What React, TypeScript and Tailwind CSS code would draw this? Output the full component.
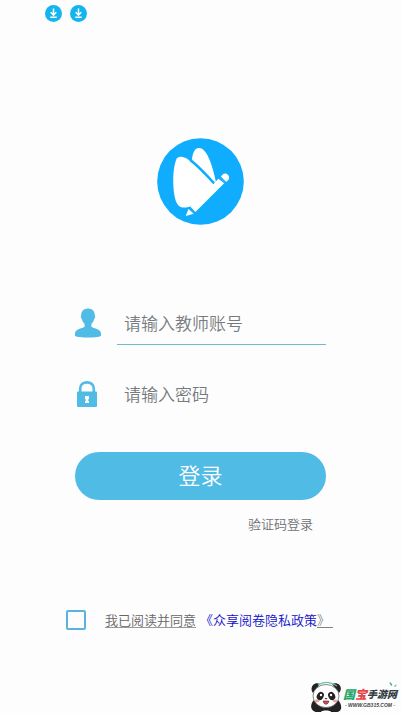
import { useState } from 'react';

function DownloadBadge() {
  return (
    <svg viewBox="0 0 17 17" className="w-[17px] h-[17px]" aria-hidden="true">
      <circle cx="8.5" cy="8.5" r="8.5" fill="#14b5ee" />
      <path d="M8.5 3.5v6.5M5.7 7.2l2.8 2.9 2.8-2.9M5.3 12.3h6.4" fill="none" stroke="#fff" strokeWidth="1.5" />
    </svg>
  );
}

function ButterflyLogo() {
  return (
    <svg viewBox="20 23 263 263" className="w-[87px] h-[87px]" aria-hidden="true">
      <circle cx="151.5" cy="154.5" r="131" fill="#10adff" />
      <g fill="#fff">
        <path d="M80 84C96 72 117 88 137 107L190 161L206 146L223 160L136 247L121 231L126 227C111 236 88 237 80 220C66 190 65 115 80 84Z" />
        <path d="M126 89C127 67 135 53 147 53C168 53 185 93 198 154L194 156C172 132 150 108 126 89Z" />
        <path d="M211 142L218 134C225 126 238 132 238 143C238 147 236 150 233 152L226 158Z" />
        <path d="M115 238L131 252L107 259Z" />
      </g>
      <path d="M119 90C145 111 168 134 192 161" fill="none" stroke="#10adff" strokeWidth="5" />
      <path d="M210 139L229 158" stroke="#10adff" strokeWidth="4" />
    </svg>
  );
}

function UserIcon() {
  return (
    <svg viewBox="0 0 26 30" className="w-[26px] h-[30px]" fill="#50bce6" aria-hidden="true">
      <path d="M13 .5C17.5.5 20 3.5 19.8 7.5C20.5 8 20.3 10 19.2 11C18.5 13.5 17.3 15 16.3 16.2V18.5C18 20.7 25 20.4 26 25V28C22 30 4 30 0 28V25C1 20.4 8 20.7 9.7 18.5V16.2C8.7 15 7.5 13.5 6.8 11C5.7 10 5.5 8 6.2 7.5C6 3.5 8.5.5 13 .5Z" />
    </svg>
  );
}

function LockIcon() {
  return (
    <svg viewBox="0 0 20 26" className="w-5 h-[26px]" aria-hidden="true">
      <path d="M3.2 11V7.5C3.2-.7 16.8-.7 16.8 7.5V11" fill="none" stroke="#50bce6" strokeWidth="2.6" />
      <rect y="10.5" width="20" height="15.5" rx="1" fill="#50bce6" />
      <path d="M8 15h4v3.2h-.8V20H12v2H8v-2h.8v-1.8H8Z" fill="#fff" />
    </svg>
  );
}

function PandaLogo() {
  return (
    <svg viewBox="0 0 32 32" className="w-8 h-8" aria-hidden="true">
      <path d="M3 12C-1 7 4 0 10 3M22 3C28 0 34 6 29 12" fill="#222" />
      <path d="M4 19C-1 24 1 31 7 31H26C32 31 33 24 28 19Z" fill="#222" />
      <ellipse cx="16" cy="15" rx="13" ry="11.5" fill="#fff" stroke="#555" strokeWidth=".7" />
      <path d="M8 4C13 .5 20 .5 27 5" fill="none" stroke="#69c5a4" strokeWidth="1.2" />
      <ellipse cx="10.3" cy="15" rx="3.3" ry="4.2" fill="#222" transform="rotate(30 10.3 15)" />
      <ellipse cx="21.7" cy="15" rx="3.3" ry="4.2" fill="#222" transform="rotate(-30 21.7 15)" />
      <circle cx="11" cy="14" r="1.2" fill="#fff" />
      <circle cx="21" cy="14" r="1.2" fill="#fff" />
      <ellipse cx="7" cy="20" rx="2.2" ry="1.4" fill="#f59aa0" />
      <ellipse cx="25" cy="20" rx="2.2" ry="1.4" fill="#f59aa0" />
      <path d="M14.5 17h3L16 18.5Z" fill="#222" />
      <path d="M13.2 20h5.6C18.3 24.3 13.7 24.3 13.2 20Z" fill="#e34a50" stroke="#222" strokeWidth=".6" />
      <path d="M11 31C11 29 21 29 21 31Z" fill="#fff" />
    </svg>
  );
}

export default function App() {
  const [account, setAccount] = useState('');
  const [password, setPassword] = useState('');
  const [agreed, setAgreed] = useState(false);

  return (
    <div className="min-h-screen flex flex-col bg-[#fdfdfd] font-['Noto_Sans_CJK_SC',sans-serif]">
      <header className="flex gap-2 pt-[5px] pl-[45px]">
        <DownloadBadge />
        <DownloadBadge />
      </header>

      <main className="flex flex-col pt-[116px]">
        <div className="flex justify-center">
          <ButterflyLogo />
        </div>

        <form className="flex flex-col pt-[76px] px-[75px]" onSubmit={(e) => e.preventDefault()}>
          <div className="flex items-center">
            <label htmlFor="account" aria-label="请输入教师账号" className="w-[42px]">
              <UserIcon />
            </label>
            <input
              id="account"
              type="text"
              value={account}
              onChange={(e) => setAccount(e.target.value)}
              placeholder="请输入教师账号"
              className="flex-1 min-w-0 h-11 px-[7px] border-b border-[#6fbccb] text-[17px] font-[350] text-[#555] placeholder:text-[#777b80] outline-none"
            />
          </div>

          <div className="flex items-center pt-[27px]">
            <label htmlFor="password" aria-label="请输入密码" className="w-[42px] pl-[2px]">
              <LockIcon />
            </label>
            <input
              id="password"
              type="password"
              value={password}
              onChange={(e) => setPassword(e.target.value)}
              placeholder="请输入密码"
              className="flex-1 min-w-0 h-11 px-[7px] pb-[2px] text-[17px] font-[350] text-[#555] placeholder:text-[#777b80] outline-none"
            />
          </div>

          <button type="submit" className="mt-9 h-12 pb-1 rounded-full bg-[#50bce6] text-[22px] font-[350] text-white">
            登录
          </button>
          <a href="#sms" className="self-end mt-[14px] mr-[13px] text-[13px] leading-5 font-[350] text-[#707075]">
            验证码登录
          </a>
        </form>

        <div className="flex items-center pt-[76px] pl-[66px]">
          <input
            id="agree"
            type="checkbox"
            checked={agreed}
            onChange={(e) => setAgreed(e.target.checked)}
            className="appearance-none w-5 h-5 rounded-[2px] border-2 border-[#5ab1e2] checked:bg-[#5ab1e2]"
          />
          <div className="flex gap-1 pl-[19px] text-[13px] leading-5 font-[350] text-[#666] whitespace-nowrap">
            <label htmlFor="agree" className="underline decoration-[#999] underline-offset-2">
              我已阅读并同意
            </label>
            <a href="#privacy" className="text-[#1010c8]">
              《众享阅卷隐私政策<span className="text-[#808080] underline underline-offset-2">》&nbsp;</span>
            </a>
          </div>
        </div>
      </main>

      <footer className="mt-auto self-end flex items-center gap-px pr-1">
        <PandaLogo />
        <div className="relative flex flex-col items-center">
          <div className="flex items-center text-[10px] leading-4 font-black italic text-[#333c43]">
            <span className="text-[12px] text-[#25a768]">国</span>
            <span className="text-[12px] text-[#e44746]">宝</span>
            <span>手游网</span>
          </div>
          <span className="font-['Liberation_Sans',sans-serif] text-[5px] leading-[6px] font-bold italic text-[#444]">- WWW.GB315.COM -</span>
          <svg viewBox="0 0 8 5" className="absolute right-0 -top-1 w-2 h-[5px]" aria-hidden="true">
            <path d="M.5 0C3 1 3.5 2.5 3 4C1.500 3.500.5 2 .5 0ZM7.500 2.500C6.500 2.500 5.500 3.500 5 4.800C6.500 4.800 7.500 4 7.500 2.500Z" fill="#5db58e" />
          </svg>
        </div>
      </footer>
    </div>
  );
}
